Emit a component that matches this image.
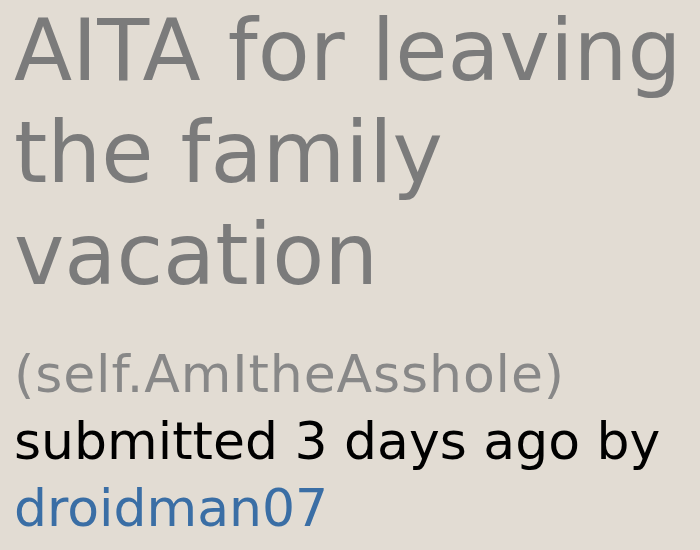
export default function App() {
  return (
    <div
      className="h-[550px] w-[700px] overflow-hidden bg-[#e2dcd3] px-[14px]"
      style={{ fontFamily: '"DejaVu Sans", Verdana, sans-serif' }}
    >
      <h1 className="text-[85px] leading-[102px] font-normal text-[#7b7b7b]">
        AITA for leaving the family vacation
      </h1>
      <div className="mt-[35px] text-[52px] leading-[67px]">
        <div className="tracking-[0.9px] text-[#888888]">(self.AmItheAsshole)</div>
        <div className="text-black">submitted 3 days ago by</div>
        <a href="#" className="text-[#3a6ea5]">
          droidman07
        </a>
      </div>
    </div>
  );
}
